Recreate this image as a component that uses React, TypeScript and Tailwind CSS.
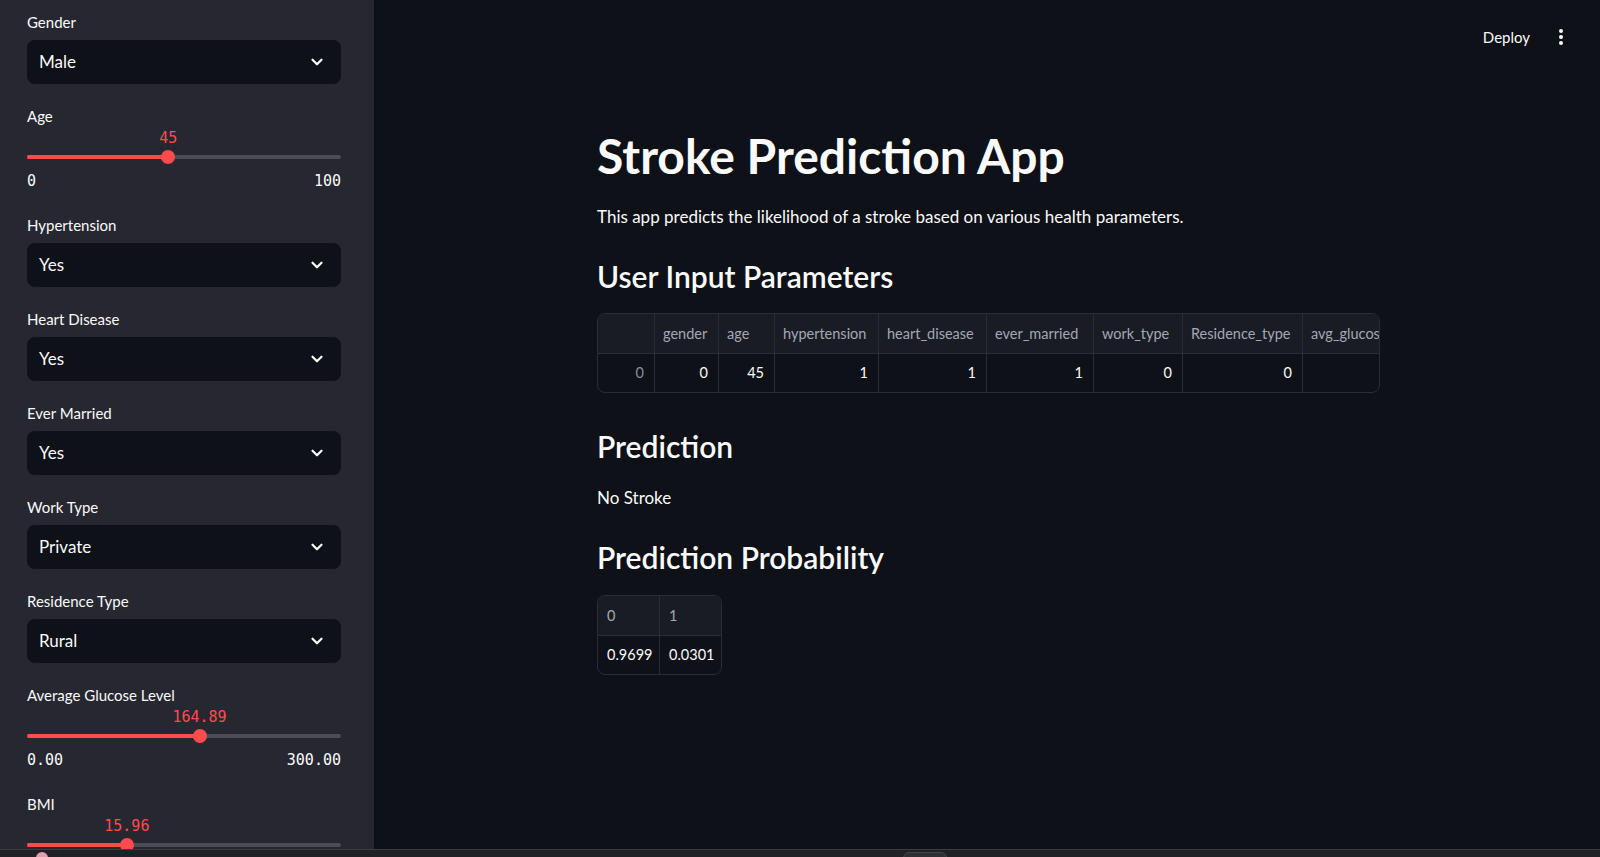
const font = { fontFamily: 'Lato, "Noto Sans", sans-serif' };

function Chevron() {
  return (
    <svg width="18" height="18" viewBox="0 0 24 24" fill="none" stroke="#fafafa" strokeWidth="3" strokeLinecap="round" strokeLinejoin="round">
      <path d="M6 9l6 6 6-6" />
    </svg>
  );
}

function SelectBox({ label, value }: { label: string; value: string }) {
  return (
    <div className="flex flex-col">
      <div className="h-6 flex items-center text-[15px] text-[#fafafa]">{label}</div>
      <div className="mt-[6px] h-[44px] rounded-lg bg-[#0e1117] flex items-center justify-between pl-[12px] pr-[15px] text-[17px] text-[#fafafa]">
        <span>{value}</span>
        <Chevron />
      </div>
    </div>
  );
}

function Slider({ label, value, min, max, pct }: { label: string; value: string; min?: string; max?: string; pct: number }) {
  return (
    <div className="flex flex-col">
      <div className="h-6 flex items-center text-[15px] text-[#fafafa]">{label}</div>
      <div className="relative h-[21px]">
        <span
          className="absolute top-0 -translate-x-1/2 text-[15px] leading-[21px] text-[#ff4b4b]"
          style={{ left: `${pct * 100}%`, fontFamily: '"DejaVu Sans Mono", monospace' }}
        >
          {value}
        </span>
      </div>
      <div className="relative h-4 flex items-center">
        <div className="h-[4px] w-full rounded-full bg-[#4a4c56]" />
        <div className="absolute left-0 h-[4px] rounded-full bg-[#ff4b4b]" style={{ width: `${pct * 100}%` }} />
        <div className="absolute w-[14px] h-[14px] -ml-[7px] rounded-full bg-[#ff4b4b]" style={{ left: `${pct * 100}%` }} />
      </div>
      {min !== undefined && (
        <div className="mt-1 h-6 flex items-center justify-between text-[15px] text-[#fafafa]" style={{ fontFamily: '"DejaVu Sans Mono", monospace' }}>
          <span>{min}</span>
          <span>{max}</span>
        </div>
      )}
    </div>
  );
}

const cols = [
  { name: '', w: 57, v: '0', idx: true },
  { name: 'gender', w: 64, v: '0' },
  { name: 'age', w: 56, v: '45' },
  { name: 'hypertension', w: 104, v: '1' },
  { name: 'heart_disease', w: 108, v: '1' },
  { name: 'ever_married', w: 107, v: '1' },
  { name: 'work_type', w: 89, v: '0' },
  { name: 'Residence_type', w: 120, v: '0' },
  { name: 'avg_glucose_level', w: 140, v: '' },
];

export default function App() {
  return (
    <div className="h-[857px] w-[1600px] flex flex-col overflow-hidden bg-[#0e1117]" style={font}>
      <div className="flex flex-1 min-h-0">
        <aside className="w-[374px] shrink-0 bg-[#262730] px-[27px] pr-[33px] pt-[10px] overflow-hidden">
          <div className="flex flex-col gap-5">
            <SelectBox label="Gender" value="Male" />
            <Slider label="Age" value="45" min="0" max="100" pct={0.45} />
            <SelectBox label="Hypertension" value="Yes" />
            <SelectBox label="Heart Disease" value="Yes" />
            <SelectBox label="Ever Married" value="Yes" />
            <SelectBox label="Work Type" value="Private" />
            <SelectBox label="Residence Type" value="Rural" />
            <Slider label="Average Glucose Level" value="164.89" min="0.00" max="300.00" pct={0.5496} />
            <Slider label="BMI" value="15.96" pct={0.318} />
          </div>
        </aside>

        <main className="flex-1 flex flex-col pl-[3px]">
          <header className="h-[74px] flex items-center justify-end pr-[35px] gap-[27px]">
            <span className="text-[15px] text-[#fafafa]">Deploy</span>
            <svg width="8" height="18" viewBox="0 0 8 18" fill="#fafafa">
              <circle cx="4" cy="3" r="2" />
              <circle cx="4" cy="9" r="2" />
              <circle cx="4" cy="15" r="2" />
            </svg>
          </header>

          <div className="w-[783px] mx-auto mt-[53px] text-[#fafafa]">
            <h1 className="text-[48px] leading-[58px] font-bold">Stroke Prediction App</h1>
            <p className="mt-[19px] text-[17px] leading-[26px]">
              This app predicts the likelihood of a stroke based on various health parameters.
            </p>
            <h2 className="mt-[27px] text-[30px] leading-[38px] font-semibold">User Input Parameters</h2>

            <div className="mt-[18px] rounded-lg border border-[#2b2d35] overflow-hidden text-[14.5px]">
              <div className="flex h-[40px] bg-[#1a1c23] border-b border-[#2b2d35] whitespace-nowrap">
                {cols.map((c, i) => (
                  <div
                    key={i}
                    className="shrink-0 flex items-center px-[8px] text-[#a3a8b8] border-r border-[#2b2d35] overflow-hidden"
                    style={{ width: c.w }}
                  >
                    {c.name}
                  </div>
                ))}
              </div>
              <div className="flex h-[38px] whitespace-nowrap">
                {cols.map((c, i) => (
                  <div
                    key={i}
                    className={`shrink-0 flex items-center justify-end px-[10px] border-r border-[#2b2d35] ${c.idx ? 'text-[#8a8f9c]' : 'text-[#fafafa]'}`}
                    style={{ width: c.w }}
                  >
                    {c.v}
                  </div>
                ))}
              </div>
            </div>

            <h2 className="mt-[34px] text-[30px] leading-[38px] font-semibold">Prediction</h2>
            <p className="mt-[20px] text-[17px] leading-[26px]">No Stroke</p>
            <h2 className="mt-[27px] text-[30px] leading-[38px] font-semibold">Prediction Probability</h2>

            <div className="mt-[19px] inline-flex flex-col rounded-lg border border-[#2b2d35] overflow-hidden text-[14.5px]">
              <div className="flex h-[40px] bg-[#1a1c23] border-b border-[#2b2d35]">
                <div className="w-[62px] flex items-center px-[9px] text-[#a3a8b8] border-r border-[#2b2d35]">0</div>
                <div className="w-[61px] flex items-center px-[9px] text-[#a3a8b8]">1</div>
              </div>
              <div className="flex h-[38px]">
                <div className="w-[62px] flex items-center px-[9px] border-r border-[#2b2d35]">0.9699</div>
                <div className="w-[61px] flex items-center px-[9px]">0.0301</div>
              </div>
            </div>
          </div>
        </main>
      </div>

      <div className="h-[8px] shrink-0 bg-[#202126] border-t border-[#3c3d43] relative">
        <div className="absolute left-[36px] top-[2px] w-[12px] h-[12px] rounded-full bg-[#e0a0b0]" />
        <div className="absolute left-[903px] top-[2px] w-[44px] h-[10px] rounded-t-md bg-[#2e2f35] border border-[#45464c]" />
      </div>
    </div>
  );
}
